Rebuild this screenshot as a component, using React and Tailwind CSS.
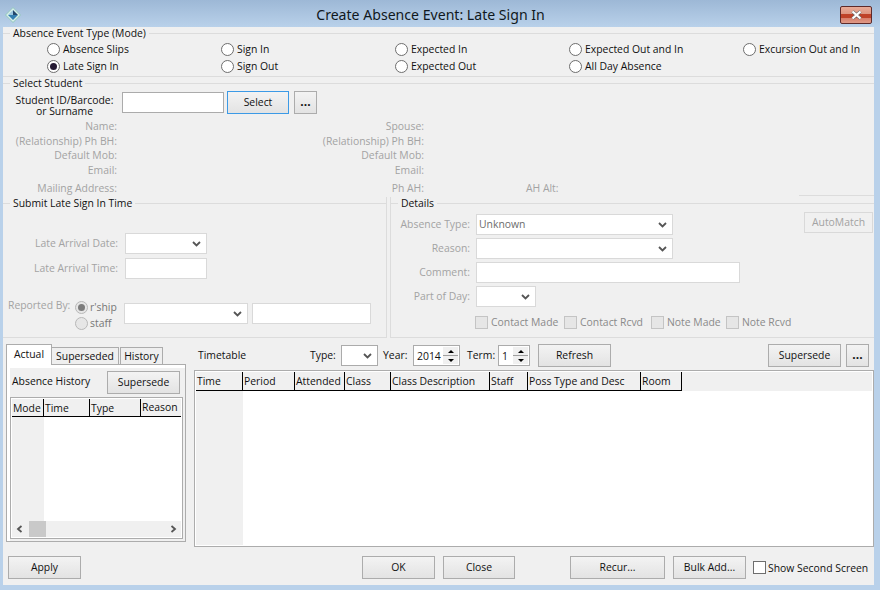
const FONT = "font-['Open_Sans','Noto_Sans',sans-serif]";

function Radio({ checked, disabled }) {
  return (
    <span className={`flex h-[13px] w-[13px] shrink-0 items-center justify-center rounded-full border ${disabled ? 'border-[#b8b8b8] bg-[#e6e6e6]' : 'border-[#6e6e6e] bg-white'}`}>
      {checked && <span className={`h-[7px] w-[7px] rounded-full ${disabled ? 'bg-[#7c7c7c]' : 'bg-[#251a33]'}`} />}
    </span>
  );
}

function RadioLabel({ label, checked }) {
  return (
    <div className="flex h-[14px] items-center gap-[3px] whitespace-nowrap">
      <Radio checked={checked} />
      <span>{label}</span>
    </div>
  );
}

function Btn({ className = '', children, focus }) {
  return (
    <div className={`flex shrink-0 items-center justify-center whitespace-nowrap border bg-gradient-to-b from-[#f3f3f3] to-[#e3e3e3] pb-[1px] ${focus ? 'border-[#3c9ae6]' : 'border-[#acacac]'} ${className}`}>
      {children}
    </div>
  );
}

function Chevron() {
  return (
    <svg width="9" height="6" viewBox="0 0 9 6" className="shrink-0">
      <path d="M1 1 L4.5 4.5 L8 1" fill="none" stroke="#555" strokeWidth="1.8" />
    </svg>
  );
}

function Combo({ className = '', children, dark }) {
  return (
    <div className={`flex h-[21px] shrink-0 items-center justify-between border bg-white pl-[2px] pr-[5px] ${dark ? 'border-[#ababab]' : 'border-[#d9d9d9]'} ${className}`}>
      <span className="pb-[2px] text-[#6d6d6d]">{children}</span>
      <Chevron />
    </div>
  );
}

function Field({ className = '' }) {
  return <div className={`h-[21px] shrink-0 border border-[#d9d9d9] bg-white ${className}`} />;
}

function Spin({ value, className = '' }) {
  return (
    <div className={`flex h-[21px] shrink-0 items-center justify-between border border-[#ababab] bg-white pl-[3px] ${className}`}>
      <span>{value}</span>
      <div className="mr-[1px] flex h-[17px] w-[15px] flex-col bg-[#f0f0f0]">
        <div className="flex flex-1 items-center justify-center border-b border-[#a0a0a0]">
          <span className="h-0 w-0 border-x-[3px] border-b-[3px] border-x-transparent border-b-black" />
        </div>
        <div className="flex flex-1 items-center justify-center">
          <span className="h-0 w-0 border-x-[3px] border-t-[3px] border-x-transparent border-t-black" />
        </div>
      </div>
    </div>
  );
}

function LegendLine({ label, className = '' }) {
  return (
    <div className={`flex h-[12px] shrink-0 items-center ${className}`}>
      <span className="h-px w-[7px] bg-[#dcdcdc]" />
      <span className="whitespace-nowrap px-[3px] leading-[14px]">{label}</span>
      <span className="h-px flex-1 bg-[#dcdcdc]" />
    </div>
  );
}

function Info({ rows }) {
  return (
    <div className="flex flex-col text-[#a3a3a3]">
      {rows.map(([t, h]) => (
        <div key={t} className="whitespace-nowrap text-right leading-[14px]" style={{ height: h }}>{t}</div>
      ))}
    </div>
  );
}

function HeadCell({ w, children }) {
  return (
    <div className="flex h-full shrink-0 items-center whitespace-nowrap border-r border-black pl-[1px]" style={{ width: w }}>
      {children}
    </div>
  );
}

function Check({ label, className = '' }) {
  return (
    <div className={`flex shrink-0 items-center gap-[3px] ${className}`}>
      <span className="h-[13px] w-[13px] shrink-0 border border-[#c4c4c4] bg-[#e6e6e6]" />
      <span>{label}</span>
    </div>
  );
}

export default function App() {
  const infoRows = [['Name:', 15], ['(Relationship) Ph BH:', 14], ['Default Mob:', 15], ['Email:', 18], ['Mailing Address:', 14]];
  const infoRows2 = [['Spouse:', 15], ['(Relationship) Ph BH:', 14], ['Default Mob:', 15], ['Email:', 18], ['Ph AH:', 14]];
  return (
    <div className={`${FONT} flex h-[590px] w-[880px] flex-col overflow-hidden bg-[#b9d1ea] text-[10.4px] leading-[14px] text-[#111]`}>
      {/* Title bar */}
      <div className="flex h-[27px] shrink-0 items-center bg-gradient-to-b from-[#9db8d6] to-[#b9d1ea] pl-[5px] pr-[8px]">
        <svg className="mt-[3px] shrink-0" width="16" height="16" viewBox="0 0 16 16">
          <path d="M8 0.5 L15.5 8 L8 15.5 L0.5 8 Z" fill="#d6efe8" stroke="#8fc4bc" />
          <path d="M8 3 L3 8 L8 8 Z" fill="#9cc8e0" />
          <path d="M8 3 L13 8 L8 8 Z" fill="#24486c" />
          <path d="M3 8 L8 13 L13 8 Z" fill="#347fb0" />
        </svg>
        <div className="mt-[3px] flex-1 text-center text-[14.1px] leading-[20px] text-[#101820] font-['Noto_Sans','Open_Sans',sans-serif]">Create Absence Event: Late Sign In</div>
        <div className="mt-[2px] flex h-[18px] w-[32px] shrink-0 items-center justify-center rounded-[2px] border border-[#5e2a2a] bg-[linear-gradient(#e9ab98_0%,#dd9580_45%,#bf4228_46%,#bf4228_70%,#d8806c_71%,#e09a88_100%)]">
          <svg width="13" height="10" viewBox="0 0 13 10">
            <path d="M2.5 1.5 L10.5 8.5 M10.5 1.5 L2.5 8.5" stroke="#6f6f6f" strokeWidth="3.4" />
            <path d="M2.5 1.5 L10.5 8.5 M10.5 1.5 L2.5 8.5" stroke="#fff" strokeWidth="2.2" />
          </svg>
        </div>
      </div>

      {/* Client */}
      <div className="ml-[3px] flex h-[558px] w-[871px] flex-col bg-[#f0f0f0]">
        {/* Mode */}
        <div className="shrink-0 border-b border-[#dcdcdc] pb-[3px]">
          <LegendLine label="Absence Event Type (Mode)" />
          <div className="ml-[44px] mt-[3px] grid grid-cols-[174px_174px_174px_174px_1fr] gap-y-[3px]">
            <RadioLabel label="Absence Slips" />
            <RadioLabel label="Sign In" />
            <RadioLabel label="Expected In" />
            <RadioLabel label="Expected Out and In" />
            <RadioLabel label="Excursion Out and In" />
            <RadioLabel label="Late Sign In" checked />
            <RadioLabel label="Sign Out" />
            <RadioLabel label="Expected Out" />
            <RadioLabel label="All Day Absence" />
          </div>
        </div>

        {/* Select student */}
        <div className="flex h-[120px] shrink-0 flex-col">
          <LegendLine label="Select Student" />
          <div className="mt-[2px] flex h-[23px] items-center">
            <div className="ml-[10px] mt-[4px] h-[22px] w-[103px] self-start whitespace-nowrap text-center leading-[11px]">Student ID/Barcode:<br />or Surname</div>
            <div className="ml-[6px] h-[21px] w-[102px] border border-[#ababab] bg-white" />
            <Btn focus className="ml-[3px] h-[23px] w-[62px]">Select</Btn>
            <Btn className="ml-[5px] h-[23px] w-[23px] text-[12px] font-bold">...</Btn>
          </div>
          <div className="mt-[5px] flex">
            <div className="w-[114px] shrink-0"><Info rows={infoRows} /></div>
            <div className="ml-[193px] w-[114px] shrink-0"><Info rows={infoRows2} /></div>
            <div className="ml-[102px] mt-[62px] text-[#a3a3a3]">AH Alt:</div>
          </div>
          <div className="mb-[1px] mt-auto h-px w-[75px] self-end bg-[#dcdcdc]" />
        </div>

        {/* Submit / details */}
        <div className="flex h-[141px] shrink-0 gap-[3px]">
          <div className="flex w-[384px] shrink-0 flex-col border-b border-r border-[#dcdcdc]">
            <LegendLine label="Submit Late Sign In Time" />
            <div className="mt-[24px] flex items-center">
              <span className="w-[115px] pb-[2px] text-right text-[#a3a3a3]">Late Arrival Date:</span>
              <Combo className="ml-[7px] w-[82px]" />
            </div>
            <div className="mt-[4px] flex items-center">
              <span className="w-[115px] pb-[2px] text-right text-[#a3a3a3]">Late Arrival Time:</span>
              <Field className="ml-[7px] w-[82px]" />
            </div>
            <div className="ml-[5px] mt-[19px] flex">
              <span className="w-[67px] shrink-0 text-[#a3a3a3]">Reported By:</span>
              <div className="mt-[2px] flex w-[44px] shrink-0 flex-col gap-[2px] text-[#777]">
                <div className="flex h-[14px] items-center gap-[2px]"><Radio checked disabled />r'ship</div>
                <div className="flex h-[14px] items-center gap-[2px]"><Radio disabled />staff</div>
              </div>
              <Combo className="ml-[5px] mt-[5px] w-[124px]" />
              <Field className="ml-[4px] mt-[5px] w-[119px]" />
            </div>
          </div>
          <div className="flex flex-1 flex-col border-b border-l border-[#dcdcdc]">
            <LegendLine label="Details" />
            <div className="flex">
              <div className="flex flex-col">
                <div className="mt-[5px] flex items-center">
                  <span className="w-[79px] pb-[2px] text-right text-[#a3a3a3]">Absence Type:</span>
                  <Combo className="ml-[6px] w-[197px]">Unknown</Combo>
                </div>
                <div className="mt-[3px] flex items-center">
                  <span className="w-[79px] pb-[2px] text-right text-[#a3a3a3]">Reason:</span>
                  <Combo className="ml-[6px] w-[197px]" />
                </div>
                <div className="mt-[3px] flex items-center">
                  <span className="w-[79px] pb-[2px] text-right text-[#a3a3a3]">Comment:</span>
                  <Field className="ml-[6px] w-[264px]" />
                </div>
                <div className="mt-[3px] flex items-center">
                  <span className="w-[79px] pb-[2px] text-right text-[#a3a3a3]">Part of Day:</span>
                  <Combo className="ml-[6px] w-[60px]" />
                </div>
                <div className="ml-[84px] mt-[8px] flex whitespace-nowrap text-[#8a8a8a]">
                  <Check label="Contact Made" className="w-[89px]" />
                  <Check label="Contact Rcvd" className="w-[87px]" />
                  <Check label="Note Made" className="w-[75px]" />
                  <Check label="Note Rcvd" />
                </div>
              </div>
              <div className="ml-auto mr-[1px] mt-[3px] flex h-[21px] w-[69px] items-center justify-center border border-[#d9d9d9] pb-[1px] text-[#a3a3a3]">AutoMatch</div>
            </div>
          </div>
        </div>

        {/* Lower */}
        <div className="flex h-[209px] shrink-0">
          {/* Left tabs */}
          <div className="ml-[3px] mt-[6px] flex w-[180px] shrink-0 flex-col">
            <div className="z-10 -mb-px flex h-[21px] shrink-0 items-start">
              <div className="flex h-[21px] w-[46px] items-center justify-center border border-b-0 border-[#acacac] bg-white pb-[2px]">Actual</div>
              <div className="mt-[3px] flex h-[18px] w-[67px] items-center justify-center border border-l-0 border-[#acacac] bg-[#efefef]">Superseded</div>
              <div className="ml-[1px] mt-[3px] flex h-[18px] w-[43px] items-center justify-center border border-[#acacac] bg-[#efefef]">History</div>
            </div>
            <div className="flex h-[178px] shrink-0 flex-col border border-[#acacac] bg-white pl-[3px] pt-[3px]">
              <div className="flex flex-1 flex-col bg-[#f0f0f0] pb-[2px] pt-[3px]">
                <div className="flex items-center justify-between pl-[2px] pr-[5px]">
                  <span className="-mt-[3px]">Absence History</span>
                  <Btn className="h-[23px] w-[73px]">Supersede</Btn>
                </div>
                <div className="mr-[2px] mt-[3px] flex flex-1 flex-col border border-[#acacac] bg-white p-px">
                  <div className="flex h-[18px] shrink-0 border-b border-black bg-[#f0f0f0]">
                    <HeadCell w={32}>Mode</HeadCell>
                    <HeadCell w={46}>Time</HeadCell>
                    <HeadCell w={51}>Type</HeadCell>
                    <div className="pl-[1px] leading-[16px]">Reason</div>
                  </div>
                  <div className="flex-1"><div className="h-full w-[32px] bg-[#f0f0f0]" /></div>
                  <div className="flex h-[16px] shrink-0 items-center bg-[#f0f0f0] px-[4px]">
                    <svg width="7" height="8" viewBox="0 0 7 8"><path d="M5.5 1 L2 4 L5.5 7" fill="none" stroke="#555" strokeWidth="1.8" /></svg>
                    <div className="ml-[6px] h-[16px] w-[17px] bg-[#c9c9c9]" />
                    <svg className="ml-auto" width="7" height="8" viewBox="0 0 7 8"><path d="M1.5 1 L5 4 L1.5 7" fill="none" stroke="#555" strokeWidth="1.8" /></svg>
                  </div>
                </div>
              </div>
            </div>
          </div>

          {/* Timetable */}
          <div className="ml-[8px] flex flex-1 flex-col">
            <div className="mt-[6px] flex h-[23px] shrink-0 items-center">
              <span className="ml-[4px] w-[112px] shrink-0 pb-[2px]">Timetable</span>
              <span className="w-[31px] shrink-0 pb-[2px]">Type:</span>
              <Combo dark className="w-[37px]" />
              <span className="ml-[5px] w-[30px] shrink-0 pb-[2px]">Year:</span>
              <Spin value="2014" className="w-[47px]" />
              <span className="ml-[7px] w-[31px] shrink-0 pb-[2px]">Term:</span>
              <Spin value="1" className="w-[32px]" />
              <Btn className="ml-[8px] h-[23px] w-[73px]">Refresh</Btn>
              <Btn className="ml-auto h-[23px] w-[73px]">Supersede</Btn>
              <Btn className="ml-[5px] mr-[5px] h-[23px] w-[23px] text-[12px] font-bold">...</Btn>
            </div>
            <div className="mt-[3px] flex h-[177px] flex-col border border-[#acacac] bg-white p-px">
              <div className="flex h-[19px] shrink-0 bg-[#f0f0f0]">
                <div className="flex h-full border-b border-black">
                  <HeadCell w={47}>Time</HeadCell>
                  <HeadCell w={52}>Period</HeadCell>
                  <HeadCell w={50}>Attended</HeadCell>
                  <HeadCell w={46}>Class</HeadCell>
                  <HeadCell w={99}>Class Description</HeadCell>
                  <HeadCell w={38}>Staff</HeadCell>
                  <HeadCell w={113}>Poss Type and Desc</HeadCell>
                  <HeadCell w={41}>Room</HeadCell>
                </div>
              </div>
              <div className="flex-1"><div className="h-full w-[47px] bg-[#f0f0f0]" /></div>
            </div>
          </div>
        </div>

        {/* Footer */}
        <div className="mt-[9px] flex h-[23px] shrink-0 items-center pl-[5px]">
          <Btn className="h-[23px] w-[73px]">Apply</Btn>
          <Btn className="ml-[281px] h-[23px] w-[73px]">OK</Btn>
          <Btn className="ml-[8px] h-[23px] w-[72px]">Close</Btn>
          <Btn className="ml-[55px] h-[23px] w-[95px]">Recur...</Btn>
          <Btn className="ml-[8px] h-[23px] w-[73px]">Bulk Add...</Btn>
          <span className="ml-[7px] h-[13px] w-[13px] shrink-0 border border-[#6e6e6e] bg-white" />
          <span className="ml-[2px] whitespace-nowrap">Show Second Screen</span>
        </div>
      </div>
    </div>
  );
}
